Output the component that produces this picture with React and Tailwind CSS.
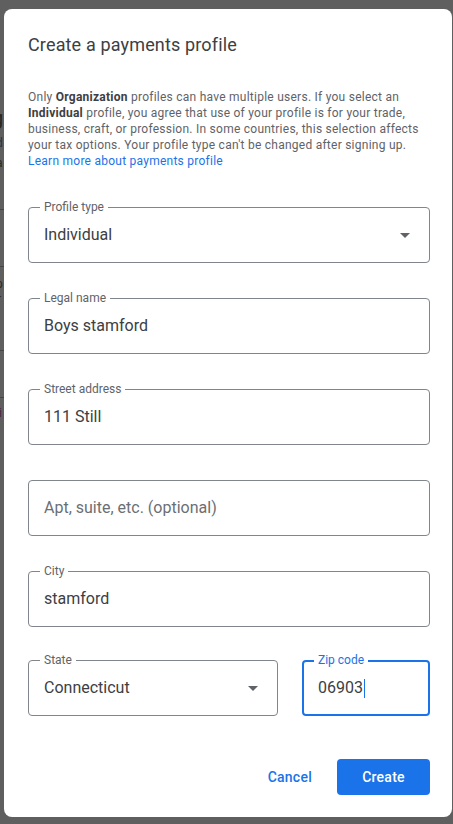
import React from "react";

const font = { fontFamily: "Roboto, 'Noto Sans', Arial, sans-serif" };

function Arrow() {
  return (
    <svg width="10" height="5" viewBox="0 0 10 5" className="shrink-0">
      <polygon points="0,0 10,0 5,5" fill="#5f6368" />
    </svg>
  );
}

function Field({ label, value, placeholder, select, className = "" }) {
  return (
    <div
      className={`relative h-[56px] rounded-[4px] border border-[#80868b] flex items-center pl-[15px] pr-[19px] ${className}`}
    >
      {label && (
        <span className="absolute left-[11px] top-[-9px] bg-white px-[4px] text-[12px] leading-[16px] text-[#5f6368]">
          {label}
        </span>
      )}
      <span
        className={`flex-1 text-[16px] leading-[24px] ${
          value ? "text-[#3c4043]" : "text-[#6b6f73]"
        }`}
      >
        {value || placeholder}
      </span>
      {select && <Arrow />}
    </div>
  );
}

export default function App() {
  return (
    <div
      className="relative w-[453px] h-[824px] bg-[#5f5f5f] overflow-hidden"
      style={font}
    >
      {/* page behind the scrim (only a sliver is visible) */}
      <div className="w-[4px] h-full overflow-hidden flex flex-col">
        <div className="mt-[110px] h-[16px] text-[20px] leading-[16px] text-[#262626] ml-[-8px]">g</div>
        <div className="mt-[10px] h-[14px] text-[12px] leading-[14px] text-[#28324a] ml-[-4px]">d</div>
        <div className="mt-[6px] h-[14px] text-[12px] leading-[14px] text-[#2a2a2a] ml-[-4px]">a</div>
        <div className="mt-[39px] h-[1px] bg-[#454545]" />
        <div className="mt-[56px] h-[1px] bg-[#454545]" />
        <div className="mt-[10px] h-[14px] text-[12px] leading-[14px] text-[#2a2a2a] ml-[-4px]">p</div>
        <div className="mt-[1px] h-[14px] text-[12px] leading-[14px] text-[#2a2a2a] ml-[-3px]">r</div>
        <div className="mt-[44px] h-[1px] bg-[#454545]" />
        <div className="mt-[46px] h-[1px] bg-[#454545]" />
        <div className="mt-[8px] h-[14px] text-[12px] leading-[14px] text-[#4a2840] ml-[-1px]">i</div>
      </div>

      {/* dialog */}
      <div className="absolute left-[4px] top-[9px] w-[448px] bg-white rounded-[8px] pt-[24px] pl-[24px] pr-[22px] pb-[22px] flex flex-col">
        <h1 className="text-[18px] leading-[24px] text-[#3c4043] font-normal tracking-[0.15px]">
          Create a payments profile
        </h1>

        <p className="mt-[32px] text-[12px] leading-[16px] text-[#5f6368] whitespace-nowrap tracking-[0.25px]">
          Only <b className="font-bold text-[#3c4043]">Organization</b> profiles can have multiple users. If you select an
          <br />
          <b className="font-bold text-[#3c4043]">Individual</b> profile, you agree that use of your profile is for your trade,
          <br />
          business, craft, or profession. In some countries, this selection affects
          <br />
          your tax options. Your profile type can't be changed after signing up.
          <br />
          <a className="text-[#1a73e8]">Learn more about payments profile</a>
        </p>

        <Field className="mt-[38px]" label="Profile type" value="Individual" select />
        <Field className="mt-[35px]" label="Legal name" value="Boys stamford" />
        <Field className="mt-[35px]" label="Street address" value="111 Still" />
        <Field className="mt-[35px]" placeholder="Apt, suite, etc. (optional)" />
        <Field className="mt-[35px]" label="City" value="stamford" />

        <div className="mt-[33px] flex gap-[24px]">
          <Field className="w-[250px]" label="State" value="Connecticut" select />
          <div className="relative flex-1 h-[56px] rounded-[4px] border-2 border-[#1a73e8] flex items-center pl-[14px]">
            <span className="absolute left-[10px] top-[-10px] bg-white px-[4px] text-[12px] leading-[16px] text-[#1a73e8]">
              Zip code
            </span>
            <span className="text-[16px] leading-[24px] text-[#3c4043]">06903</span>
            <span className="ml-[1px] inline-block w-[1px] h-[19px] bg-[#1a73e8]" />
          </div>
        </div>

        <div className="mt-[43px] flex justify-end items-center gap-[17px]">
          <button className="h-[36px] px-[8px] text-[14px] font-medium text-[#1a73e8] tracking-[0.25px]">
            Cancel
          </button>
          <button className="h-[36px] w-[93px] rounded-[4px] bg-[#1a73e8] text-white text-[14px] font-medium tracking-[0.25px]">
            Create
          </button>
        </div>
      </div>
    </div>
  );
}
